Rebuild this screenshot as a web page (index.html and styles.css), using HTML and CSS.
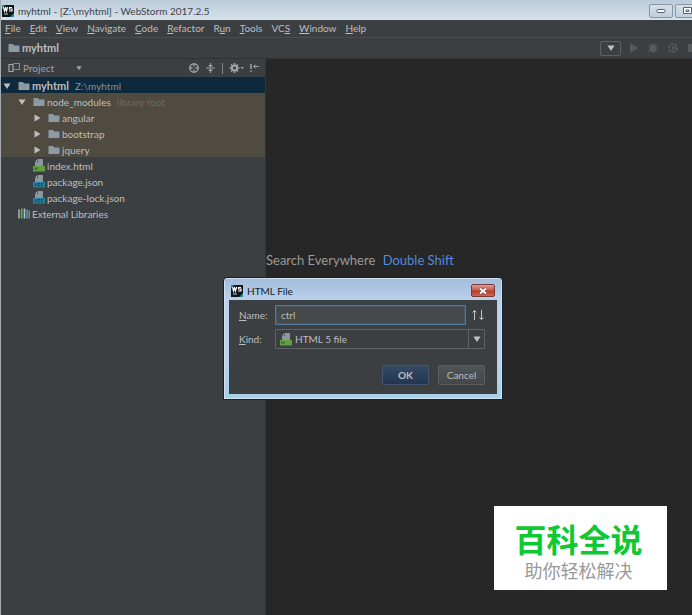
FILE: index.html
```html
<!DOCTYPE html>
<html lang="en">
<head>
<meta charset="UTF-8">
<meta name="viewport" content="width=device-width, initial-scale=1.0">
<title>myhtml - [Z:\myhtml] - WebStorm 2017.2.5</title>
<link rel="stylesheet" href="styles.css">
</head>
<body>

<!-- shared icons -->
<svg class="defs" aria-hidden="true">
    <symbol id="logo" viewBox="0 0 12 12">
        <rect width="12" height="12" fill="#0b1418"/>
        <path d="M0 0h3L0 4zM12 8v4H8z" fill="#1b8c96"/>
        <path d="M1.500 2l1 4 1-3 1 3 1-4M10 2.500H7.500v1.500H10v2H7" fill="none" stroke="#fff" stroke-width="1.200"/>
        <path d="M2 9h4" stroke="#ccc"/>
    </symbol>
    <symbol id="folder" viewBox="0 0 12 10">
        <path d="M.5 1h4.300l1.400 1.500h5.300V9H.5z" fill="#8b9aa3"/>
    </symbol>
    <symbol id="html" viewBox="0 0 12 13">
        <path d="M5 0h5v7H2V3h3z" fill="#8b979e"/>
        <path d="M4.400 0v2.400H2z" fill="#b3bcc1"/>
        <path d="M0 7h12v5.500H0z" fill="#62a03f"/>
        <path d="M2 8.500v2.500M4 8.500v2.500M2 9.500h2" fill="none" stroke="#35602a" stroke-width=".8"/>
    </symbol>
    <symbol id="json" viewBox="0 0 12 13">
        <path d="M5 0h5v7H2V3h3z" fill="#8b979e"/>
        <path d="M4.400 0v2.400H2z" fill="#b3bcc1"/>
        <path d="M0 7h12v5.500H0z" fill="#26809c"/>
        <path d="M3 8.300v2.700H1.500M7 8.500H5v2.400h2M10 8.500H8.500v2.400H10" fill="none" stroke="#123f52" stroke-width=".8"/>
    </symbol>
    <symbol id="down" viewBox="0 0 8 8"><path d="M.5 1.500h7L4 7z" fill="currentColor"/></symbol>
    <symbol id="right" viewBox="0 0 8 8"><path d="M1.500.5v7L7.500 4z" fill="currentColor"/></symbol>
</svg>

<div class="window">
    <header class="titlebar">
        <svg class="logo"><use href="#logo"/></svg>
        <span class="caption">myhtml - [Z:\myhtml] - WebStorm 2017.2.5</span>
        <div class="win-buttons">
            <button class="win-button" aria-label="Minimize">
                <svg width="10" height="6" viewBox="0 0 10 6"><rect x="1" y="1.500" width="8" height="3" rx="1" fill="#fff" stroke="#59636c"/></svg>
            </button>
            <button class="win-button" aria-label="Maximize">
                <svg width="9" height="8" viewBox="0 0 9 8"><path d="M.5.5h8v6h-8zM3 3h3v1.500H3z" fill="#fff" stroke="#59636c"/></svg>
            </button>
        </div>
    </header>

    <nav class="menu">
        <a href="#"><u>F</u>ile</a>
        <a href="#"><u>E</u>dit</a>
        <a href="#"><u>V</u>iew</a>
        <a href="#"><u>N</u>avigate</a>
        <a href="#"><u>C</u>ode</a>
        <a href="#"><u>R</u>efactor</a>
        <a href="#">R<u>u</u>n</a>
        <a href="#"><u>T</u>ools</a>
        <a href="#">VC<u>S</u></a>
        <a href="#"><u>W</u>indow</a>
        <a href="#"><u>H</u>elp</a>
    </nav>

    <div class="navbar">
        <svg class="folder"><use href="#folder"/></svg>
        <b>myhtml</b>
        <div class="run-tools">
            <button class="config" aria-label="Run configuration"><svg class="arrow"><use href="#down"/></svg></button>
            <button class="tool" aria-label="Run"><svg width="10" height="12" viewBox="0 0 10 12"><path d="M1 1l8 5-8 5z" fill="currentColor"/></svg></button>
            <button class="tool" aria-label="Debug"><svg width="12" height="12" viewBox="0 0 12 12"><ellipse cx="6" cy="6.500" rx="3.500" ry="4" fill="currentColor"/><path d="M1 3l3 2M11 3L8 5M1 10l3-2M11 10L8 8M4 1l1 2M8 1L7 3" stroke="currentColor"/></svg></button>
            <button class="tool" aria-label="Coverage"><svg width="12" height="12" viewBox="0 0 12 12"><circle cx="6" cy="6" r="4" fill="none" stroke="currentColor" stroke-width="2" stroke-dasharray="3 1"/><path d="M5 4l4 2-4 2z" fill="currentColor"/></svg></button>
            <button class="tool" aria-label="Stop"><svg width="10" height="10" viewBox="0 0 10 10"><rect x="1" y="1" width="8" height="8" fill="currentColor"/></svg></button>
        </div>
    </div>

    <main class="content">
        <aside class="project">
            <div class="project-header">
                <svg width="12" height="10" viewBox="0 0 12 10"><path d="M5 .5h6.500v6H6" fill="none" stroke="#4f9fc0" stroke-width="1.200"/><path d="M1 1.500h4v7H1z" fill="none" stroke="#a4abaf" stroke-width="1.200"/></svg>
                <span class="project-title">Project</span>
                <svg class="small-arrow"><use href="#down"/></svg>
                <div class="project-tools">
                    <button class="tool" aria-label="Scroll from source"><svg width="12" height="12" viewBox="0 0 12 12"><circle cx="6" cy="6" r="4.200" fill="none" stroke="currentColor" stroke-width="1.300"/><path d="M6 1v3.500M6 7.500V11M1 6h3.500M7.500 6H11" stroke="currentColor" stroke-width="1.300"/></svg></button>
                    <button class="tool" aria-label="Collapse all"><svg width="11" height="12" viewBox="0 0 11 12"><path d="M1 6h9M5.500 1v3M5.500 8v3" stroke="currentColor"/><path d="M3 3h5L5.500 5.500zM3 9h5L5.500 6.500z" fill="currentColor"/></svg></button>
                    <span class="divider"></span>
                    <button class="tool" aria-label="Settings"><svg width="15" height="12" viewBox="0 0 15 12"><circle cx="5.500" cy="6" r="2.600" fill="none" stroke="currentColor" stroke-width="2"/><path d="M5.500 1v2M5.500 9v2M.5 6h2M8.500 6h2M2 2.500L3.500 4M9 2.500L7.500 4M2 9.500L3.500 8M9 9.500L7.500 8" stroke="currentColor" stroke-width="1.500"/><path d="M11.500 5h3.500l-1.700 2z" fill="currentColor"/></svg></button>
                    <button class="tool" aria-label="Hide"><svg width="12" height="12" viewBox="0 0 12 12"><path d="M2 2v5M2 8.500v1.500" stroke="currentColor" stroke-width="1.500"/><path d="M4.500 4.500H10M6.500 2.500l-2 2 2 2" fill="none" stroke="currentColor"/></svg></button>
                </div>
            </div>
            <ul class="tree">
                <li class="row selected"><svg class="arrow"><use href="#down"/></svg><svg class="folder"><use href="#folder"/></svg><b>myhtml</b><span class="path">Z:\myhtml</span></li>
                <li class="row library level-1"><svg class="arrow"><use href="#down"/></svg><svg class="folder"><use href="#folder"/></svg><span>node_modules</span><span class="note">library root</span></li>
                <li class="row library level-2"><svg class="arrow"><use href="#right"/></svg><svg class="folder"><use href="#folder"/></svg><span>angular</span></li>
                <li class="row library level-2"><svg class="arrow"><use href="#right"/></svg><svg class="folder"><use href="#folder"/></svg><span>bootstrap</span></li>
                <li class="row library level-2"><svg class="arrow"><use href="#right"/></svg><svg class="folder"><use href="#folder"/></svg><span>jquery</span></li>
                <li class="row level-1"><span class="arrow"></span><svg class="file"><use href="#html"/></svg><span>index.html</span></li>
                <li class="row level-1"><span class="arrow"></span><svg class="file"><use href="#json"/></svg><span>package.json</span></li>
                <li class="row level-1"><span class="arrow"></span><svg class="file"><use href="#json"/></svg><span>package-lock.json</span></li>
                <li class="row"><span class="arrow"></span><svg class="file" viewBox="0 0 12 12"><path d="M1 2v9" stroke="#a5b0b5" stroke-width="1.600"/><path d="M3.700 1v10" stroke="#62b543" stroke-width="1.600"/><path d="M6.500 1v10" stroke="#b5c0c5" stroke-width="1.600"/><path d="M9 2v9" stroke="#40a0c0" stroke-width="1.600"/><path d="M11.200 3v8" stroke="#a5b0b5"/></svg><span>External Libraries</span></li>
            </ul>
        </aside>
        <section class="editor">
            <p class="hint">Search Everywhere <a href="#">Double Shift</a></p>
        </section>
    </main>
</div>

<form class="dialog" role="dialog" aria-labelledby="dialog-title">
    <div class="dialog-title">
        <svg class="logo"><use href="#logo"/></svg>
        <span class="caption" id="dialog-title">HTML File</span>
        <button type="button" class="close" aria-label="Close"><svg width="10" height="8" viewBox="0 0 10 8"><path d="M2 1.500l6 5M8 1.500l-6 5" stroke="#6b3a3a" stroke-width="3"/><path d="M2 1.500l6 5M8 1.500l-6 5" stroke="#fff" stroke-width="2"/></svg></button>
    </div>
    <div class="dialog-body">
        <div class="field">
            <label for="name"><u>N</u>ame:</label>
            <input type="text" id="name" value="ctrl">
            <svg class="sort" width="14" height="12" viewBox="0 0 14 12"><path d="M3.500 11V1.500M1.500 3.500l2-2 2 2M10.500 1v9.500M8.500 8.500l2 2 2-2" fill="none" stroke="#c3c6c8"/></svg>
        </div>
        <div class="field">
            <label for="kind"><u>K</u>ind:</label>
            <div class="combo">
                <svg class="file"><use href="#html"/></svg>
                <select id="kind"><option>HTML 5 file</option></select>
                <span class="combo-arrow"><svg class="arrow"><use href="#down"/></svg></span>
            </div>
        </div>
        <div class="actions">
            <button type="submit" class="button primary">OK</button>
            <button type="button" class="button">Cancel</button>
        </div>
    </div>
</form>

<div class="watermark">
    <strong>百科全说</strong>
    <span>助你轻松解决</span>
</div>

</body>
</html>
```
FILE: styles.css
```css
* {
    box-sizing: border-box;
}
body {
    margin: 0;
    font-family: Lato, "Noto Sans CJK SC", sans-serif;
    font-size: 10px;
    line-height: 16px;
    color: #bcbec0;
    background-color: #272727;
}
button, input, select {
    font: inherit;
    color: inherit;
    margin: 0;
    padding: 0;
    border: none;
    background: none;
}
a {
    color: inherit;
    text-decoration: none;
}
b {
    font-size: 11px;
}
svg {
    display: block;
    flex-shrink: 0;
}
.defs {
    position: absolute;
    width: 0;
    height: 0;
}
.logo {
    width: 12px;
    height: 12px;
}
.folder {
    width: 12px;
    height: 10px;
}
.file {
    width: 12px;
    height: 13px;
}
.arrow {
    width: 8px;
    height: 8px;
}
.small-arrow {
    width: 6px;
    height: 6px;
}

/* main window */
.window {
    display: flex;
    flex-direction: column;
    min-height: 100vh;
    border-left: 1px solid #a3abb0;
    overflow: hidden;
}
.titlebar {
    display: flex;
    align-items: center;
    gap: 4px;
    height: 20px;
    padding: 2px 0 0 1px;
    background: linear-gradient(#bccbd9, #d5e2ec);
    color: #3c434a;
}
.win-buttons {
    display: flex;
    gap: 2px;
    margin-left: auto;
    margin-right: -7px;
}
.win-button {
    display: flex;
    align-items: center;
    justify-content: center;
    width: 24px;
    height: 14px;
    border: 1px solid #8796a5;
    border-radius: 2px;
    background: linear-gradient(#d6e0ea, #c0cedb);
}
.menu {
    display: flex;
    gap: 9px;
    height: 17px;
    padding-left: 4px;
    background-color: #3c3f41;
}
.navbar {
    display: flex;
    align-items: center;
    gap: 2px;
    height: 22px;
    padding-left: 7px;
    border-top: 1px solid #4b4e50;
    border-bottom: 1px solid #303233;
    background-color: #3c3f41;
}
.run-tools {
    display: flex;
    align-items: center;
    gap: 8px;
    margin-left: auto;
    margin-right: -5px;
    color: #57595b;
}
.config {
    display: flex;
    align-items: center;
    justify-content: center;
    width: 21px;
    height: 15px;
    border: 1px solid #5e6163;
    border-radius: 2px;
    color: #c0c2c4;
}
.content {
    display: flex;
    flex: 1;
}

/* project panel */
.project {
    width: 265px;
    border-right: 1px solid #323435;
    background-color: #3c3f41;
}
.project-header {
    display: flex;
    align-items: center;
    gap: 3px;
    height: 18px;
    padding: 0 4px 0 7px;
    color: #a0a3a5;
}
.project-title {
    width: 50px;
}
.project-tools {
    display: flex;
    align-items: center;
    gap: 5px;
    margin-left: auto;
}
.divider {
    width: 1px;
    height: 11px;
    margin: 0 1px;
    background-color: #85888a;
}
.tree {
    margin: 0;
    padding: 0;
    list-style: none;
}
.row {
    display: flex;
    align-items: center;
    gap: 2px;
    height: 16px;
    padding: 1px 0 0 2px;
    white-space: nowrap;
}
.row .arrow {
    margin-right: 5px;
}
.selected {
    background-color: #0d293e;
}
.library {
    background-color: #4f4b41;
}
.level-1 {
    padding-left: 17px;
}
.level-2 {
    padding-left: 32px;
}
.path {
    margin-left: 4px;
    color: #8b9093;
}
.note {
    margin-left: 4px;
    color: #6c695f;
}

/* editor */
.editor {
    flex: 1;
    background-color: #272727;
}
.hint {
    margin: 0;
    padding-top: 193px;
    font-size: 13px;
    color: #9a9a9a;
}
.hint a {
    margin-left: 4px;
    color: #548ad9;
}

/* new file dialog */
.dialog {
    position: absolute;
    left: 223px;
    top: 277px;
    width: 280px;
    padding: 0 5px 5px;
    border: 1px solid #17232c;
    border-radius: 4px 4px 1px 1px;
    background: linear-gradient(#a3bcda, #b9d1ea 22px, #b9d1ea 75%, #a5cfe8);
    box-shadow: inset 0 0 0 1px #cfe2f2;
}
.dialog-title {
    display: flex;
    align-items: center;
    gap: 4px;
    height: 22px;
    padding: 3px 2px 0;
    color: #16202b;
}
.close {
    display: flex;
    align-items: center;
    justify-content: center;
    width: 24px;
    height: 13px;
    margin-left: auto;
    border: 1px solid #7c3937;
    border-radius: 2px;
    background: linear-gradient(#dda093, #c45443 50%, #b33626 50%, #cc6a50);
}
.dialog-body {
    padding: 5px 12px 9px 10px;
    background-color: #3c3f41;
}
.field {
    display: flex;
    align-items: center;
    height: 20px;
    margin-bottom: 4px;
}
.field label {
    width: 36px;
}
.field input {
    flex: 1;
    min-width: 0;
    height: 20px;
    padding: 0 5px;
    border: 1px solid #537a9b;
    background-color: #45494a;
    box-shadow: inset 0 0 0 1px #43576a;
    color: #bbbdbf;
    outline: none;
}
.sort {
    margin-left: 5px;
}
.combo {
    display: flex;
    flex: 1;
    align-items: center;
    gap: 3px;
    height: 20px;
    padding-left: 4px;
    border: 1px solid #5f6264;
}
.combo select {
    flex: 1;
    height: 18px;
    appearance: none;
    outline: none;
}
.combo-arrow {
    display: flex;
    align-items: center;
    justify-content: center;
    width: 16px;
    height: 18px;
    border-left: 1px solid #5f6264;
    color: #c0c2c4;
}
.actions {
    display: flex;
    justify-content: flex-end;
    gap: 9px;
    padding-top: 12px;
}
.button {
    width: 47px;
    height: 20px;
    border: 1px solid #5b5f61;
    border-radius: 2px;
    background: linear-gradient(#505456, #434749);
}
.primary {
    border-color: #41566d;
    background: linear-gradient(#344a66, #233650);
    font-weight: bold;
}

/* watermark */
.watermark {
    position: absolute;
    right: 25px;
    bottom: 25px;
    display: flex;
    flex-direction: column;
    align-items: center;
    width: 173px;
    height: 84px;
    padding: 15px 4px 0 0;
    background-color: #fff;
}
.watermark strong {
    font-size: 32px;
    line-height: 38px;
    color: #0fc832;
}
.watermark span {
    font-size: 18px;
    line-height: 24px;
    color: #999;
}
```
